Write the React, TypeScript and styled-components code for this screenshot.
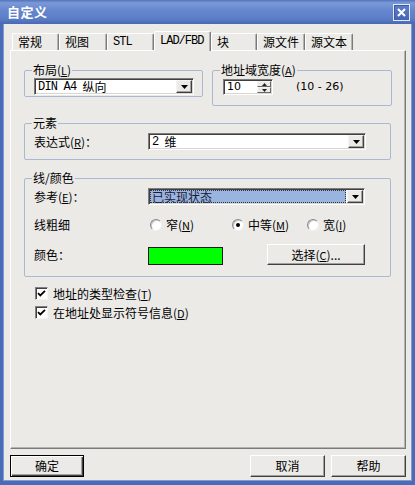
import React from "react";
import styled, { createGlobalStyle } from "styled-components";

const CJK = `"Noto Sans CJK SC", "Noto Sans", sans-serif`;
const MONO = `"Liberation Mono", "Noto Sans CJK SC", monospace`;
const SANS = `"DejaVu Sans", "Noto Sans CJK SC", sans-serif`;
const BG = "#ebeae7";
const GROUP = "#a9b9d4";

const Global = createGlobalStyle`
  html, body { margin: 0; padding: 0; background: ${BG}; }
  body { font-family: ${CJK}; font-size: 12px; line-height: 14px; color: #000; }
  * { box-sizing: border-box; }
`;

const Window = styled.div`
  width: 415px;
  height: 485px;
  display: flex;
  flex-direction: column;
  background: ${BG};
  overflow: hidden;
`;

const TitleBar = styled.div`
  height: 24px;
  flex: none;
  display: flex;
  align-items: center;
  justify-content: space-between;
  padding: 0 5px 0 7px;
  background: linear-gradient(180deg, #5373bd 0%, #7b99d8 12%, #6586cd 45%, #5d7fc8 75%, #4868b5 100%);
  color: #fff;
  font-weight: bold;
  font-size: 13px;
  letter-spacing: 0.5px;
`;

const CloseBtn = styled.div`
  width: 17px;
  height: 17px;
  border: 1px solid #e4ebf8;
  background: linear-gradient(180deg, #5d7fcb, #4465b5);
  box-shadow: inset 1px 1px #3d5aa3;
  display: flex;
  align-items: center;
  justify-content: center;
`;

const Body = styled.div`
  flex: 1;
  display: flex;
  flex-direction: column;
  border: 3px solid #4a6bb8;
  border-top: 0;
  border-bottom-width: 4px;
  box-shadow: inset 1px 0 #7f9ad2, inset -1px 0 #7f9ad2, inset 0 -1px #7f9ad2;
  padding: 7px 6px 4px 7px;
`;

const TabStrip = styled.div`
  display: flex;
  align-items: flex-end;
  height: 19px;
  padding-left: 2px;
  flex: none;
`;

const Tab = styled.div<{ $w: number; $active?: boolean; $latin?: boolean }>`
  width: ${(p) => p.$w}px;
  height: ${(p) => (p.$active ? 20 : 17)}px;
  margin-bottom: ${(p) => (p.$active ? -1 : 0)}px;
  position: relative;
  z-index: ${(p) => (p.$active ? 1 : 0)};
  background: ${BG};
  border-top: 1px solid #fff;
  border-left: 1px solid #fff;
  border-right: 1px solid #7a7a7a;
  box-shadow: inset -1px 0 #b4b4b4;
  border-radius: 2px 2px 0 0;
  padding: ${(p) => (p.$active ? "1px" : "0")} 0 0 5px;
  font-family: ${(p) => (p.$latin ? MONO : CJK)};
  font-size: 12px;
  letter-spacing: ${(p) => (p.$latin ? "-1px" : "0")};
  line-height: 16px;
  white-space: nowrap;
`;

const Panel = styled.div`
  height: 399px;
  flex: none;
  border: 1px solid;
  border-color: #fff #7a7a7a #7a7a7a #fff;
  box-shadow: inset -1px -1px #b4b4b4;
  padding: 19px 0 0 13px;
  display: flex;
  flex-direction: column;
`;

const Row = styled.div<{ $gap?: number; $mt?: number }>`
  display: flex;
  align-items: flex-start;
  gap: ${(p) => p.$gap ?? 0}px;
  margin-top: ${(p) => p.$mt ?? 0}px;
`;

const Group = styled.div<{ $w: number; $h: number; $mt?: number; $pt?: number; $pl?: number }>`
  position: relative;
  width: ${(p) => p.$w}px;
  height: ${(p) => p.$h}px;
  margin-top: ${(p) => p.$mt ?? 0}px;
  border: 1px solid ${GROUP};
  border-radius: 2px;
  padding: ${(p) => p.$pt ?? 8}px 0 0 ${(p) => p.$pl ?? 9}px;
  display: flex;
  flex-direction: column;
`;

const Legend = styled.span`
  position: absolute;
  top: -8px;
  left: 7px;
  padding: 0 1px;
  background: ${BG};
  line-height: 14px;
  white-space: nowrap;
`;

const U = styled.span`
  text-decoration: underline;
  text-decoration-thickness: 1px;
  text-underline-offset: 1px;
  font-size: 11px;
`;

const Field = styled.div<{ $w: number; $h?: number }>`
  width: ${(p) => p.$w}px;
  height: ${(p) => p.$h ?? 17}px;
  background: #fff;
  border: 1px solid;
  border-color: #7d7d7d #fff #fff #7d7d7d;
  box-shadow: inset 1px 1px #3f3f3f, inset -1px -1px #d8d6d0;
  display: flex;
  align-items: stretch;
  flex: none;
`;

const FieldText = styled.div<{ $sel?: boolean; $font?: "mono" | "sans" | "cjk" }>`
  flex: 1;
  margin: 1px 0 1px 1px;
  padding-left: 2px;
  display: flex;
  align-items: center;
  white-space: nowrap;
  font-family: ${(p) => (p.$font === "mono" ? MONO : p.$font === "sans" ? SANS : CJK)};
  font-size: ${(p) => (p.$font === "sans" ? "11px" : "12px")};
  background: ${(p) => (p.$sel ? "#99b5df" : "transparent")};
  color: ${(p) => (p.$sel ? "#1b1b3a" : "#000")};
  outline: ${(p) => (p.$sel ? "1px dotted #333" : "none")};
  outline-offset: -1px;
`;

const Mono = styled.span`
  font-family: ${MONO};
  font-size: 12px;
  letter-spacing: -0.8px;
  margin-right: 6px;
`;

const DropBtn = styled.div`
  width: 16px;
  margin: 1px;
  background: ${BG};
  border: 1px solid;
  border-color: #f4f4f2 #404040 #404040 #f4f4f2;
  box-shadow: inset -1px -1px #a0a0a0;
  display: flex;
  align-items: center;
  justify-content: center;
`;

const SpinBox = styled.div`
  width: 14px;
  margin: 1px;
  display: flex;
  flex-direction: column;
`;

const SpinHalf = styled.div`
  flex: 1;
  background: ${BG};
  border: 1px solid;
  border-color: #f4f4f2 #6a6a6a #6a6a6a #f4f4f2;
  display: flex;
  align-items: center;
  justify-content: center;
`;

const Hint = styled.span`
  font-family: ${SANS};
  font-size: 11px;
  margin-left: 23px;
  line-height: 16px;
  white-space: pre;
`;

const Line = styled.div<{ $mt?: number; $h?: number }>`
  display: flex;
  align-items: center;
  height: ${(p) => p.$h ?? 17}px;
  margin-top: ${(p) => p.$mt ?? 0}px;
`;

const Label = styled.div<{ $lh?: number }>`
  width: 114px;
  flex: none;
  white-space: nowrap;
  line-height: ${(p) => p.$lh ?? 14}px;
`;

const RadioItem = styled.div<{ $w?: number; $ml?: number }>`
  display: flex;
  align-items: center;
  gap: 4px;
  width: ${(p) => (p.$w ? `${p.$w}px` : "auto")};
  margin-left: ${(p) => p.$ml ?? 0}px;
  white-space: nowrap;
`;

const RadioCircle = styled.div<{ $on?: boolean }>`
  width: 12px;
  height: 12px;
  border-radius: 50%;
  background: #fff;
  border: 1px solid;
  border-color: #8a8a8a #f0f0f0 #f0f0f0 #8a8a8a;
  box-shadow: inset 1px 1px #c8c8c8;
  display: flex;
  align-items: center;
  justify-content: center;
  &::after {
    content: "";
    width: 4px;
    height: 4px;
    border-radius: 50%;
    background: ${(p) => (p.$on ? "#000" : "transparent")};
  }
`;

const Swatch = styled.div`
  width: 75px;
  height: 18px;
  margin-top: 3px;
  background: #00ff00;
  border: 1px solid #1a1a1a;
  flex: none;
`;

const Button = styled.div<{ $w: number; $h?: number; $default?: boolean; $ml?: number }>`
  width: ${(p) => p.$w}px;
  height: ${(p) => p.$h ?? 22}px;
  margin-left: ${(p) => p.$ml ?? 0}px;
  background: ${BG};
  display: flex;
  align-items: center;
  justify-content: center;
  flex: none;
  white-space: nowrap;
  border: 1px solid;
  border-color: ${(p) => (p.$default ? "#000" : "#fff #404040 #404040 #fff")};
  box-shadow: ${(p) =>
    p.$default
      ? "inset 1px 1px #fff, inset -1px -1px #404040, inset -2px -2px #a0a0a0"
      : "inset -1px -1px #a0a0a0"};
`;

const CheckRow = styled.div<{ $mt: number }>`
  display: flex;
  align-items: center;
  gap: 5px;
  height: 13px;
  margin-top: ${(p) => p.$mt}px;
  margin-left: 11px;
  white-space: nowrap;
`;

const CheckBox = styled.div`
  width: 13px;
  height: 13px;
  background: #fff;
  border: 1px solid;
  border-color: #808080 #f4f4f2 #f4f4f2 #808080;
  box-shadow: inset 1px 1px #404040;
  display: flex;
  align-items: center;
  justify-content: center;
  flex: none;
`;

const Footer = styled.div`
  display: flex;
  justify-content: space-between;
  margin-top: 6px;
  flex: none;
`;

const FooterRight = styled.div`
  display: flex;
  gap: 6px;
`;

const Arrow = () => (
  <svg width="7" height="4" viewBox="0 0 7 4">
    <path d="M0 0h7L3.5 4z" fill="#000" />
  </svg>
);

const SmallArrow = ({ up }: { up?: boolean }) => (
  <svg width="5" height="3" viewBox="0 0 5 3">
    <path d={up ? "M2.5 0L5 3H0z" : "M0 0h5L2.5 3z"} fill="#222" />
  </svg>
);

const Check = () => (
  <svg width="9" height="9" viewBox="0 0 9 9">
    <path d="M1 4.2l2.3 2.3L8 1.8" stroke="#000" strokeWidth="1.8" fill="none" />
  </svg>
);

const tabs: { t: string; w: number; latin?: boolean; active?: boolean }[] = [
  { t: "常规", w: 47 },
  { t: "视图", w: 48 },
  { t: "STL", w: 47, latin: true },
  { t: "LAD/FBD", w: 57, latin: true, active: true },
  { t: "块", w: 46 },
  { t: "源文件", w: 48 },
  { t: "源文本", w: 48 },
];

export default function App() {
  return (
    <>
      <Global />
      <Window>
        <TitleBar>
          <span>自定义</span>
          <CloseBtn>
            <svg width="9" height="9" viewBox="0 0 9 9">
              <path d="M1 1l7 7M8 1L1 8" stroke="#fff" strokeWidth="2" />
            </svg>
          </CloseBtn>
        </TitleBar>
        <Body>
          <TabStrip>
            {tabs.map((tb) => (
              <Tab key={tb.t} $w={tb.w} $latin={tb.latin} $active={tb.active}>
                {tb.t}
              </Tab>
            ))}
          </TabStrip>
          <Panel>
            <Row $gap={9}>
              <Group $w={179} $h={27} $pt={7}>
                <Legend>
                  布局(<U>L</U>)
                </Legend>
                <Field $w={160}>
                  <FieldText>
                    <Mono>DIN A4</Mono>纵向
                  </FieldText>
                  <DropBtn>
                    <Arrow />
                  </DropBtn>
                </Field>
              </Group>
              <Group $w={180} $h={36} $pt={8} $pl={10}>
                <Legend>
                  地址域宽度(<U>A</U>)
                </Legend>
                <Line $h={16}>
                  <Field $w={50} $h={16}>
                    <FieldText $font="sans">10</FieldText>
                    <SpinBox>
                      <SpinHalf>
                        <SmallArrow up />
                      </SpinHalf>
                      <SpinHalf>
                        <SmallArrow />
                      </SpinHalf>
                    </SpinBox>
                  </Field>
                  <Hint>(10 - 26)</Hint>
                </Line>
              </Group>
            </Row>

            <Group $w={367} $h={37} $mt={17} $pt={9}>
              <Legend>元素</Legend>
              <Line>
                <Label>
                  表达式(<U>R</U>)：
                </Label>
                <Field $w={218}>
                  <FieldText>
                    <Mono>2</Mono>维
                  </FieldText>
                  <DropBtn>
                    <Arrow />
                  </DropBtn>
                </Field>
              </Line>
            </Group>

            <Group $w={367} $h={99} $mt={18} $pt={9}>
              <Legend>线/颜色</Legend>
              <Line>
                <Label>
                  参考(<U>E</U>)：
                </Label>
                <Field $w={217}>
                  <FieldText $sel>已实现状态</FieldText>
                  <DropBtn>
                    <Arrow />
                  </DropBtn>
                </Field>
              </Line>
              <Line $mt={11}>
                <Label>线粗细</Label>
                <RadioItem $w={82} $ml={2}>
                  <RadioCircle />
                  <span>
                    窄(<U>N</U>)
                  </span>
                </RadioItem>
                <RadioItem $w={75}>
                  <RadioCircle $on />
                  <span>
                    中等(<U>M</U>)
                  </span>
                </RadioItem>
                <RadioItem>
                  <RadioCircle />
                  <span>
                    宽(<U>I</U>)
                  </span>
                </RadioItem>
              </Line>
              <Row $mt={11}>
                <Label $lh={21}>颜色：</Label>
                <Swatch />
                <Button $w={98} $h={21} $ml={44}>
                  选择(<U>C</U>)...
                </Button>
              </Row>
            </Group>

            <CheckRow $mt={10}>
              <CheckBox>
                <Check />
              </CheckBox>
              <span>
                地址的类型检查(<U>T</U>)
              </span>
            </CheckRow>
            <CheckRow $mt={6}>
              <CheckBox>
                <Check />
              </CheckBox>
              <span>
                在地址处显示符号信息(<U>D</U>)
              </span>
            </CheckRow>
          </Panel>
          <Footer>
            <Button $w={74} $default>
              确定
            </Button>
            <FooterRight>
              <Button $w={75}>取消</Button>
              <Button $w={75}>帮助</Button>
            </FooterRight>
          </Footer>
        </Body>
      </Window>
    </>
  );
}
